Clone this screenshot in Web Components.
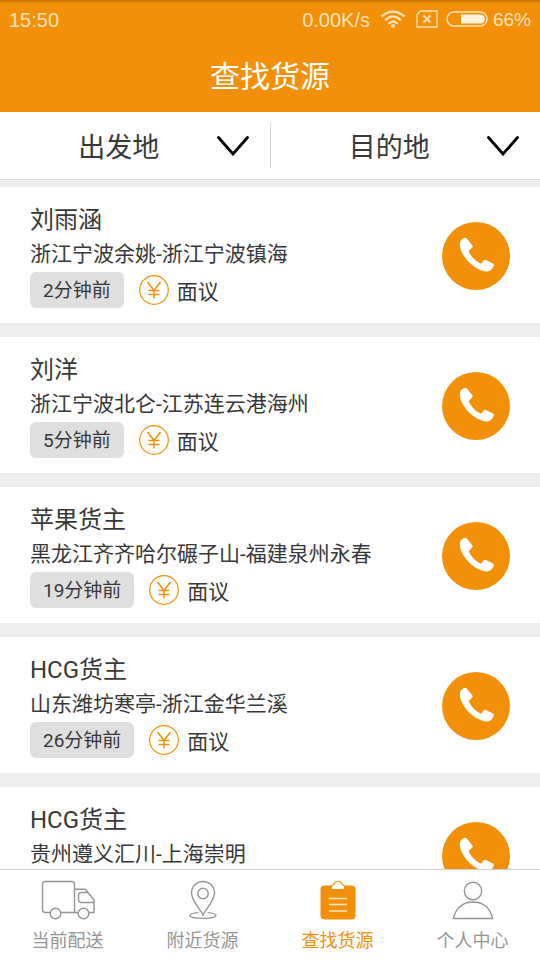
<!DOCTYPE html>
<html lang="zh-CN">
<head>
<meta charset="utf-8">
<meta name="viewport" content="width=device-width, initial-scale=1">
<title>查找货源</title>
<style>
  html, body { height: 100%; margin: 0; }
  body { font-family: Roboto, "Noto Sans CJK SC", sans-serif; color: #383838; background: #eee; }
</style>
</head>
<body>
<freight-app></freight-app>
<script>
const define = (name, html, setup) => {
  const tpl = document.createElement('template');
  tpl.innerHTML = html;
  customElements.define(name, class extends HTMLElement {
    constructor() {
      super();
      this.attachShadow({ mode: 'open' }).append(tpl.content.cloneNode(true));
    }
    connectedCallback() { if (setup) setup(this, this.shadowRoot); }
  });
};

define('status-bar', `
<style>
  :host { display: flex; align-items: center; height: 40px; padding: 0 9px; color: #ffe3b8;
    font: 20px/40px "Liberation Sans", sans-serif; }
  .right { margin-left: auto; display: flex; align-items: center; }
  .wifi { margin-left: 10px; }
  .sim { margin-left: 10px; }
  .battery { margin: 0 5px 0 8px; }
  .percent { font-size: 19px; }
  svg { display: block; }
</style>
<span>15:50</span>
<div class="right">
  <span>0.00K/s</span>
  <svg class="wifi" width="26" height="20" viewBox="0 0 26 20" fill="none" stroke="currentColor" stroke-width="2.3">
    <path d="M1.5 6.5Q13-3.200 24.500 6.500M5 10.300Q13 2.500 21 10.300M8.500 13.800Q13 9.300 17.500 13.800"/>
    <circle cx="13" cy="16" r="2" fill="currentColor" stroke="none"/>
  </svg>
  <svg class="sim" width="22" height="20" viewBox="0 0 22 20" fill="none" stroke="currentColor" stroke-width="1.300">
    <path d="M4.500 1H21V17H1V4.500Z"/><path d="M7.500 5.500L14.500 12.500M14.500 5.500L7.500 12.500" stroke-width="2"/>
  </svg>
  <svg class="battery" width="42" height="18" viewBox="0 0 42 18">
    <rect x="1" y="1" width="40" height="14" rx="7" fill="none" stroke="currentColor" stroke-width="1.500"/>
    <path d="M15 3.500H34.500A4.500 4.500 0 0 1 34.500 12.500H15Z" fill="#fff1da"/>
  </svg>
  <span class="percent">66%</span>
</div>`);

define('app-header', `
<style>
  :host { display: block; flex: none; background: linear-gradient(#c97305, #f39009 4px, #f39009); color: #fff; }
  h1 { margin: 0; padding-top: 2px; font-size: 30px; line-height: 70px; font-weight: 400; text-align: center; }
</style>
<status-bar></status-bar>
<h1><slot></slot></h1>`);

define('place-filter', `
<style>
  :host { flex: 1; display: flex; min-width: 0; }
  button { flex: 1; display: flex; align-items: center; padding: 0 21px; border: 0; background: none;
    font: inherit; font-size: 27px; color: inherit; cursor: pointer; }
  span { flex: 1; text-align: center; }
  svg { flex: none; display: block; }
</style>
<button type="button" aria-haspopup="listbox"><span><slot></slot></span>
  <svg width="32" height="20" viewBox="0 0 32 20" fill="none" stroke="#000" stroke-width="2.800" stroke-linecap="round"><path d="M1.500 1.500L16 18L30.500 1.500"/></svg>
</button>`);

define('filter-bar', `
<style>
  :host { display: flex; align-items: center; flex: none; height: 67px; background: #fff; border-bottom: 1px solid #d8d8d8; }
  ::slotted(place-filter) { align-self: stretch; }
  i { width: 1px; height: 45px; background: #d4d4d4; }
</style>
<slot name="from"></slot><i></i><slot name="to"></slot>`);

define('call-button', `
<style>
  :host { display: block; flex: none; }
  button { display: block; width: 68px; height: 68px; padding: 0; border: 0; border-radius: 50%; background: #f39009; cursor: pointer; }
  svg { display: block; }
</style>
<button type="button" aria-label="拨打电话">
  <svg width="68" height="68" viewBox="0 0 68 68" fill="#fff"><g transform="translate(1 -1)"><path d="M20.500 17.300Q22.500 16 24 17.700L29.300 24.200Q30.300 25.700 29 26.800L26.600 29Q25.500 30 26.300 31.500C28.500 36 32.500 40 37 42.200Q38.500 42.800 39.300 41.500L40.600 39.400Q41.500 38.300 43 38.900L50 42.500Q51.500 43.500 50.600 45.200C48.500 49.500 46 51 42.500 50.500C31 48.500 18.500 36 17 25.500C16.500 21.500 17.300 19 20.500 17.300Z"/></g></svg>
</button>`);

define('cargo-card', `
<style>
  :host { display: flex; align-items: center; justify-content: space-between; padding: 16px 30px 15px; background: #fff; }
  h2 { margin: 0; font-size: 24px; line-height: 34px; font-weight: 400; }
  p { margin: 0; font-size: 21px; line-height: 35px; }
  .meta { display: flex; align-items: center; height: 36px; font-size: 21px; }
  .time { padding: 1px 13px 0; border-radius: 6px; background: #dfdfdf; font-size: 19px; line-height: 35px; }
  svg { display: block; margin: 0 8px 0 15px; }
</style>
<article>
  <h2><slot></slot></h2>
  <p></p>
  <div class="meta">
    <span class="time"></span>
    <svg width="30" height="30" viewBox="0 0 30 30" fill="none" stroke="#f39009"><circle cx="15" cy="15" r="14.300" stroke-width="1.200"/><path d="M8.500 7L15 15.500L21.500 7M15 15.500V23.500M9.500 15.500H20.500M9.500 19.500H20.500" stroke-width="1.500"/></svg>
    <span class="price"></span>
  </div>
</article>
<call-button></call-button>`, (el, root) => {
  root.querySelector('p').textContent = el.getAttribute('route');
  if (el.hasAttribute('time')) {
    root.querySelector('.time').textContent = el.getAttribute('time');
    root.querySelector('.price').textContent = el.getAttribute('price');
  } else {
    root.querySelector('.meta').replaceChildren();
  }
});

define('cargo-list', `
<style>
  :host { flex: 1; min-height: 0; overflow: hidden; display: flex; flex-direction: column; gap: 14px; padding-top: 7px; background: #eee; }
  ::slotted(*) { flex: none; }
</style>
<slot></slot>`);

const icons = {
  truck: '<path d="M9 32.500H4.500Q1.500 32.500 1.500 29.500V4.500Q1.500 1.500 4.500 1.500H30.500Q33.500 1.500 33.500 4.500V32.500M20 32.500H37M33.500 9.300H44.500L53 20V32.500H48M53 22.500H40.500Q37.500 22.500 37.500 19.500V15.500Q37.500 12.500 40.500 12.500H47"/><circle cx="14.500" cy="33.500" r="5.300"/><circle cx="42.500" cy="33.500" r="5.300"/>',
  pin: '<path d="M27 35C25 30 15.500 21 15.500 13A11.500 11.500 0 0 1 38.500 13C38.500 21 29 30 27 35Z"/><circle cx="27" cy="13.500" r="5.200"/><path d="M22.500 32.600C17 33 14 34 14 35.500C14 39.300 40 39.300 40 35.500C40 34 37 33 31.500 32.600"/>',
  clipboard: '<rect x="9.500" y="5.500" width="35" height="34" rx="4" fill="currentColor" stroke="none"/><path d="M20.500 9.500V6.500Q20.500 5 22.500 5Q23 1.500 27 1.500T31.500 5Q33.500 5 33.500 6.500V9.500Z" fill="#fff" stroke-width="1.200"/><path d="M18 18.500H36M18 24.500H36M18 31H36" stroke="#ffe6bd"/>',
  person: '<circle cx="27" cy="11" r="8.700"/><path d="M7.500 38.500C9.500 28 17 22 27 22S44.500 28 46.500 38.500Z"/>'
};

define('nav-item', `
<style>
  :host { flex: 1; min-width: 0; }
  a { display: flex; flex-direction: column; align-items: center; padding: 10px 0 6px; color: #959595; text-decoration: none; }
  a[aria-current] { color: #f39009; }
  svg { display: block; }
  span { font-size: 18px; line-height: 26px; margin-top: 8px; }
</style>
<a href="#"><svg width="54" height="40" viewBox="0 0 54 40" fill="none" stroke="currentColor" stroke-width="1.400" aria-hidden="true"></svg><span><slot></slot></span></a>`, (el, root) => {
  root.querySelector('svg').innerHTML = icons[el.getAttribute('icon')];
  if (el.hasAttribute('active')) root.querySelector('a').setAttribute('aria-current', 'page');
});

define('tab-nav', `
<style>
  :host { display: block; flex: none; border-top: 1px solid #cfcfcf; background: #fff; }
  nav { display: flex; }
</style>
<nav><slot></slot></nav>`);

define('freight-app', `
<style>
  :host { display: flex; flex-direction: column; height: 100vh; }
</style>
<app-header>查找货源</app-header>
<filter-bar><place-filter slot="from">出发地</place-filter><place-filter slot="to">目的地</place-filter></filter-bar>
<cargo-list>
  <cargo-card route="浙江宁波余姚-浙江宁波镇海" time="2分钟前" price="面议">刘雨涵</cargo-card>
  <cargo-card route="浙江宁波北仑-江苏连云港海州" time="5分钟前" price="面议">刘洋</cargo-card>
  <cargo-card route="黑龙江齐齐哈尔碾子山-福建泉州永春" time="19分钟前" price="面议">苹果货主</cargo-card>
  <cargo-card route="山东潍坊寒亭-浙江金华兰溪" time="26分钟前" price="面议">HCG货主</cargo-card>
  <cargo-card route="贵州遵义汇川-上海崇明">HCG货主</cargo-card>
</cargo-list>
<tab-nav>
  <nav-item icon="truck">当前配送</nav-item>
  <nav-item icon="pin">附近货源</nav-item>
  <nav-item icon="clipboard" active>查找货源</nav-item>
  <nav-item icon="person">个人中心</nav-item>
</tab-nav>`);
</script>
</body>
</html>
